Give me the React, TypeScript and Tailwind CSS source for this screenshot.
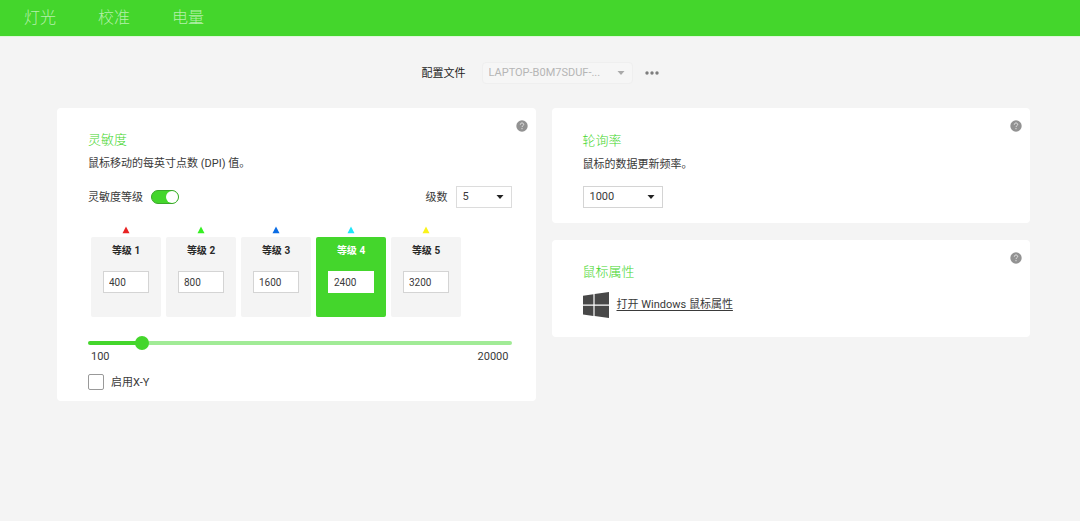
import { useState } from 'react';
import type { ReactNode, SelectHTMLAttributes } from 'react';
import cn from 'clsx';

type Level = {
    id: number;
    dpi: number;
    color: string;
}

const MIN_DPI = 100;
const MAX_DPI = 20000;

const TABS = ['灯光', '校准', '电量'];

const LEVELS: Level[] = [
    { id: 1, dpi: 400, color: 'text-[#e82222]' },
    { id: 2, dpi: 800, color: 'text-[#35f022]' },
    { id: 3, dpi: 1600, color: 'text-[#0a6ce4]' },
    { id: 4, dpi: 2400, color: 'text-[#1ee6fa]' },
    { id: 5, dpi: 3200, color: 'text-[#faf31a]' },
];

type CardProps = {
    title: string;
    className?: string;
    children: ReactNode;
}

const Card = ({ title, className, children }: CardProps) => (
    <section className={cn('relative rounded bg-white pl-[31px] pr-6', className)}>
        <h2 className="text-[13px] font-light leading-5 text-[#44d62c]">{title}</h2>
        {children}
        <button type="button" aria-label="帮助" className="absolute right-2 top-3">
            <svg viewBox="0 0 12 12" className="size-3" fill="none">
                <circle cx="6" cy="6" r="5.7" fill="#929292" />
                <path
                    d="M4.3 4.7C4.3 3.6 5 3 6 3s1.7.6 1.7 1.5C7.7 5.7 6 5.8 6 7.1"
                    stroke="#e6e6e6"
                    strokeWidth="1"
                />
                <circle cx="6" cy="8.7" r=".6" fill="#e6e6e6" />
            </svg>
        </button>
    </section>
);

const Select = ({ className, children, ...rest }: SelectHTMLAttributes<HTMLSelectElement>) => (
    <div className="relative flex">
        <select
            className={cn('appearance-none truncate border pl-1.5 text-[11px] leading-5', className)}
            {...rest}
        >
            {children}
        </select>
        <svg
            viewBox="0 0 8 4"
            className={cn(
                'pointer-events-none absolute right-2 top-1/2 h-1 w-2 -translate-y-1/2',
                rest.disabled ? 'fill-[#aaaaaa]' : 'fill-[#222222]',
            )}
        >
            <path d="M.5 0h7L4 4z" />
        </svg>
    </div>
);

export default function App() {
    const [levels, setLevels] = useState(LEVELS);
    const [activeId, setActiveId] = useState(4);
    const [enabled, setEnabled] = useState(true);

    const dpi = levels.find((level) => level.id === activeId)?.dpi ?? MIN_DPI;
    const percent = ((dpi - MIN_DPI) / (MAX_DPI - MIN_DPI)) * 100;

    const patchDpi = (id: number, value: number) => {
        setLevels(levels.map((level) => (level.id === id ? { ...level, dpi: value } : level)));
    };

    return (
        <div className="min-h-screen bg-[#f4f4f4] font-[Roboto,'Noto_Sans_CJK_SC',sans-serif] text-[11px] text-[#3a3a3a]">
            {/* TABS */}
            <nav className="flex h-[37px] items-center gap-[42px] border-b border-[#dff7da] bg-[#44d62c] px-6">
                {TABS.map((tab) => (
                    <button key={tab} type="button" className="text-base font-light text-[#b4f0aa]">
                        {tab}
                    </button>
                ))}
            </nav>

            {/* PROFILE */}
            <div className="flex items-center justify-center pt-[25px]">
                <label htmlFor="profile" className="mr-4 pt-0.5 text-[#222222]">配置文件</label>
                <Select
                    id="profile"
                    disabled
                    className="w-[151px] rounded-sm border-[#efefef] bg-[#f6f6f6] pr-7 text-[#b5b5b5] opacity-100"
                >
                    <option>LAPTOP-B0M7SDUF-...</option>
                </Select>
                <button type="button" aria-label="更多" className="ml-3">
                    <svg viewBox="0 0 14 4" className="h-1 w-3.5 fill-[#7d7d7d]">
                        <circle cx="2" cy="2" r="1.7" />
                        <circle cx="7" cy="2" r="1.7" />
                        <circle cx="12" cy="2" r="1.7" />
                    </svg>
                </button>
            </div>

            <main className="grid grid-cols-2 items-start gap-4 pb-6 pl-[57px] pr-[50px] pt-6">
                {/* SENSITIVITY */}
                <Card title="灵敏度" className="pb-[11px] pt-[22px]">
                    <p className="mt-1 leading-5">鼠标移动的每英寸点数 (DPI) 值。</p>
                    <div className="mt-3 flex items-center justify-between">
                        <label className="flex items-center gap-2">
                            <span className="pt-0.5">灵敏度等级</span>
                            <input
                                type="checkbox"
                                role="switch"
                                checked={enabled}
                                onChange={() => setEnabled(!enabled)}
                                className="peer sr-only"
                            />
                            <span className="flex h-3.5 w-7 rounded-full border border-[#3aa82a] bg-[#999999] peer-checked:justify-end peer-checked:bg-[#44d62c]">
                                <span className="size-3 rounded-full bg-white" />
                            </span>
                        </label>
                        <div className="flex items-center gap-2">
                            <label htmlFor="stages" className="pt-0.5">级数</label>
                            <Select id="stages" defaultValue="5" className="w-14 border-[#dcdcdc] bg-white">
                                {['1', '2', '3', '4', '5'].map((count) => (
                                    <option key={count}>{count}</option>
                                ))}
                            </Select>
                        </div>
                    </div>

                    <div className="ml-[3px] mt-[18px] flex gap-[5px]">
                        {levels.map((level) => {
                            const active = level.id === activeId;
                            return (
                                <div key={level.id} className="flex flex-col items-center gap-[3px]">
                                    <svg viewBox="0 0 8 8" className={cn('size-2 fill-current', level.color)}>
                                        <path d="M4 .4l3.5 6.8h-7z" />
                                    </svg>
                                    <div
                                        onClick={() => setActiveId(level.id)}
                                        className={cn(
                                            'flex h-20 w-[70px] flex-col items-center rounded-xs pt-1',
                                            active ? 'bg-[#44d62c] text-white' : 'bg-[#f4f4f4] text-[#2a2a2a]',
                                        )}
                                    >
                                        <label htmlFor={`level-${level.id}`} className="text-[10px] font-bold leading-5">
                                            等级 {level.id}
                                        </label>
                                        <input
                                            id={`level-${level.id}`}
                                            type="text"
                                            value={level.dpi}
                                            onChange={(e) => patchDpi(level.id, Number(e.target.value) || 0)}
                                            className={cn(
                                                'mt-2.5 h-[22px] w-[46px] border bg-white px-[5px] text-[10px] text-[#3a3a3a]',
                                                active ? 'border-white' : 'border-[#d4d4d4]',
                                            )}
                                        />
                                    </div>
                                </div>
                            );
                        })}
                    </div>

                    <input
                        type="range"
                        aria-label="DPI"
                        min={MIN_DPI}
                        max={MAX_DPI}
                        step={50}
                        value={dpi}
                        onChange={(e) => patchDpi(activeId, Number(e.target.value))}
                        style={{ backgroundImage: `linear-gradient(to right, #44d62c ${percent}%, #a1eb96 ${percent}%)` }}
                        className={cn(
                            'mt-6 block h-1 w-full appearance-none rounded-full',
                            '[&::-webkit-slider-thumb]:size-3.5',
                            '[&::-webkit-slider-thumb]:appearance-none',
                            '[&::-webkit-slider-thumb]:rounded-full',
                            '[&::-webkit-slider-thumb]:bg-[#44d62c]',
                        )}
                    />
                    <div className="mt-1 flex justify-between px-[3px] leading-4">
                        <span>{MIN_DPI}</span>
                        <span>{MAX_DPI}</span>
                    </div>
                    <label className="mt-[9px] flex items-center gap-[7px] leading-4">
                        <input
                            type="checkbox"
                            className="size-4 appearance-none rounded-xs border border-[#999999] bg-white checked:bg-[#44d62c]"
                        />
                        <span className="pt-0.5 leading-3.5">启用X-Y</span>
                    </label>
                </Card>

                <div className="flex flex-col gap-[17px]">
                    {/* POLLING RATE */}
                    <Card title="轮询率" className="pb-[15px] pt-[23px]">
                        <p className="mt-1 leading-5">鼠标的数据更新频率。</p>
                        <div className="mt-[11px] flex">
                            <Select aria-label="轮询率" defaultValue="1000" className="w-20 border-[#d4d4d4] bg-white">
                                <option>125</option>
                                <option>500</option>
                                <option>1000</option>
                            </Select>
                        </div>
                    </Card>

                    {/* MOUSE PROPERTIES */}
                    <Card title="鼠标属性" className="pb-[19px] pt-[22px]">
                        <div className="mt-2.5 flex items-center gap-2">
                            <svg viewBox="0 0 26 26" className="size-[26px] fill-[#484848]">
                                <path d="M0 3.7L10.4 2.3v10.3H0zM11.6 2.1L26 0v12.6H11.6zM0 13.8h10.4v10.1L0 22.5zM11.6 13.8H26V26l-14.4-2z" />
                            </svg>
                            <a href="#mouse" className="underline underline-offset-2">打开 Windows 鼠标属性</a>
                        </div>
                    </Card>
                </div>
            </main>
        </div>
    );
}
